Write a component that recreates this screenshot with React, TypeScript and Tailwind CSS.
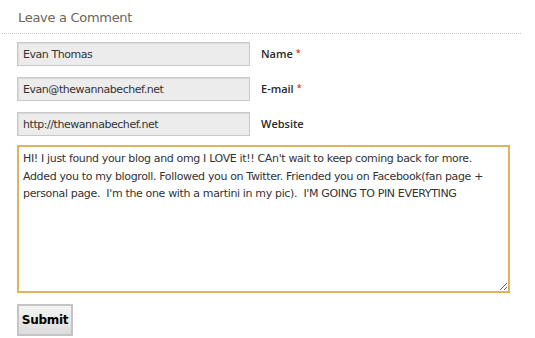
import React from 'react';

export default function App() {
  const comment =
    "HI! I just found your blog and omg I LOVE it!! CAn't wait to keep coming back for more. Added you to my blogroll. Followed you on Twitter. Friended you on Facebook(fan page + personal page.  I'm the one with a martini in my pic).  I'M GOING TO PIN EVERYTING";

  const fields = [
    { value: 'Evan Thomas', label: 'Name', required: true },
    { value: 'Evan@thewannabechef.net', label: 'E-mail', required: true },
    { value: 'http://thewannabechef.net', label: 'Website', required: false },
  ];

  return (
    <div className="w-[535px] h-[338px] bg-white overflow-hidden" style={{ fontFamily: '"DejaVu Sans", Verdana, sans-serif' }}>
      <div className="pl-[18px] pt-[8px] pb-[5px] text-[13px] leading-[20px] tracking-[-0.3px] text-[#6e6457]">Leave a Comment</div>
      <div className="ml-[2px] w-[519px] border-t border-dotted border-[#c8c8c8]" />
      <form className="pl-[17px] pt-[8px]">
        <div className="flex flex-col gap-[11px]">
          {fields.map(f => (
            <div key={f.label} className="flex items-center h-[24px]">
              <input
                type="text"
                readOnly
                value={f.value}
                className="w-[233px] h-[24px] bg-[#ececec] border border-[#c9c9c9] px-[5px] text-[11px] tracking-[-0.45px] text-[#333] outline-none shadow-[inset_1px_1px_1px_rgba(0,0,0,0.08)]"
              />
              <label className="ml-[11px] text-[11px] font-semibold text-[#2a2a2a]" style={{ fontFamily: '"Open Sans", sans-serif' }}>
                {f.label}
                {f.required && <span className="text-[#e0302a] text-[9px] align-top ml-[3px]">*</span>}
              </label>
            </div>
          ))}
        </div>
        <textarea
          readOnly
          value={comment}
          className="block mt-[9px] w-[493px] h-[148px] border-2 border-[#e3b25e] px-[4px] py-[3px] text-[11px] leading-[17.5px] tracking-[-0.35px] text-[#333] outline-none resize"
        />
        <button
          type="button"
          className="block mt-[11px] w-[56px] h-[32px] border-2 border-[#c4c4c4] bg-gradient-to-b from-[#f4f4f4] to-[#dcdcdc] text-[12px] tracking-[-0.3px] font-bold text-black"
        >
          Submit
        </button>
      </form>
    </div>
  );
}
